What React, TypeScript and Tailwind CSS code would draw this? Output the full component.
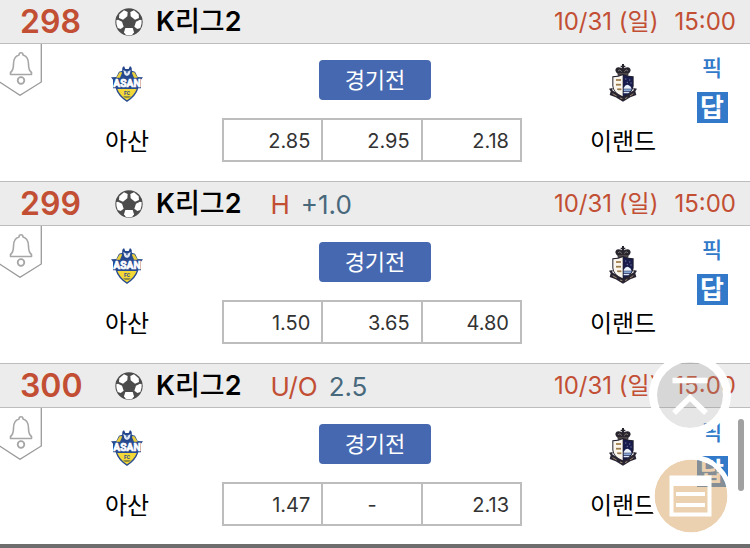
import { useState } from "react";

type Match = {
  no: number;
  league: string;
  rule?: { type: string; value: string };
  date: string;
  time: string;
  home: string;
  away: string;
  odds: string[];
};

const MATCHES: Match[] = [
  { no: 298, league: "K리그2", date: "10/31 (일)", time: "15:00", home: "아산", away: "이랜드", odds: ["2.85", "2.95", "2.18"] },
  { no: 299, league: "K리그2", rule: { type: "H", value: "+1.0" }, date: "10/31 (일)", time: "15:00", home: "아산", away: "이랜드", odds: ["1.50", "3.65", "4.80"] },
  { no: 300, league: "K리그2", rule: { type: "U/O", value: "2.5" }, date: "10/31 (일)", time: "15:00", home: "아산", away: "이랜드", odds: ["1.47", "-", "2.13"] },
];

function SoccerBall() {
  return (
    <svg viewBox="0 0 84 84" className="size-7 shrink-0">
      <circle cx="42" cy="42" r="41" fill="#4c4c4c" />
      <g fill="#fff">
        <path d="M13 19 L27 7 L38 12 L37 25 L24 35 L12 30 Z" />
        <path d="M71 19 L57 7 L46 12 L47 25 L60 35 L72 30 Z" />
        <path d="M4 37 L9 35 L21 41 L26 56 L17 63 L8 60 Q3 50 4 37 Z" />
        <path d="M80 37 L75 35 L63 41 L58 56 L67 63 L76 60 Q81 50 80 37 Z" />
        <path d="M31 60 L53 60 L57 73 L52 80 Q42 83 32 80 L27 73 Z" />
      </g>
    </svg>
  );
}

function BellTab() {
  return (
    <svg viewBox="0 0 42 52" className="w-[42px] h-[52px]" fill="none">
      <path d="M41.3 0V38L20 51.3L-1 37.5" stroke="#9a9a9a" strokeWidth="1.3" />
      <path
        d="M19 11 C19 8 23 8 23 11 C27 12 28.500 15 28.500 20 C28.500 25 29.500 27 31.500 28.500 V30.500 H10.500 V28.500 C12.500 27 13.500 25 13.500 20 C13.500 15 15 12 19 11 Z"
        stroke="#a6a6a6"
        strokeWidth="1.6"
        strokeLinejoin="round"
      />
      <circle cx="21" cy="36.500" r="3.300" stroke="#a6a6a6" strokeWidth="1.8" />
    </svg>
  );
}

function AsanCrest() {
  return (
    <svg viewBox="0 0 96 108" className="w-8 h-9">
      <path d="M24 17 L34 14 H62 L72 17 L80 33 L96 34 L90 41 V67 H82 Q76 90 48 108 Q20 90 14 67 H6 V41 L0 34 L16 33 Z" fill="#294b8f" />
      <path d="M26 19 L34 19 L27 35 L16 35 Z M70 19 L62 19 L69 35 L80 35 Z" fill="#e9cf3d" />
      <path d="M34 5 L39 0 L43 9 H53 L57 0 L62 5 L63 24 L55 33 H41 L33 24 Z" fill="#24468c" />
      <path d="M37 12 L44 16 H52 L59 12 L56 25 L51 29 H45 L40 25 Z" fill="#dfe8f5" />
      <path d="M44 16 H52 L48 23 Z" fill="#35599c" />
      <path d="M19 69 H77 Q70 88 48 103 Q26 88 19 69 Z" fill="#f4d838" />
      <text x="48" y="64" textAnchor="middle" fontFamily="Roboto, sans-serif" fontSize="31" fontWeight="700" fill="#fff" stroke="#fff" strokeWidth="2">ASAN</text>
      <text x="48" y="87" textAnchor="middle" fontFamily="Roboto, sans-serif" fontSize="15" fontWeight="700" fill="#294b8f">FC</text>
      <path d="M36 91 H60 L54 95 H42 Z" fill="#74783f" />
    </svg>
  );
}

function ElandCrest() {
  return (
    <svg viewBox="0 0 90 114" className="w-[30px] h-[38px]">
      <path d="M42 0 H48 V5 H52 V10 H48 V13 Q66 5 68 19 Q67 26 61 29 V35 H29 V29 Q23 26 22 19 Q24 5 42 13 V10 H38 V5 H42 Z" fill="#28252f" />
      <path d="M30 21 Q36 13 41 23 M60 21 Q54 13 49 23" fill="none" stroke="#8d8580" strokeWidth="2.500" />
      <path d="M31 30 H59" stroke="#a08f78" strokeWidth="2" />
      <path d="M3 74 L14 72 L13 79 L21 84 Q45 106 69 84 L77 79 L76 72 L87 74 L82 82 L85 93 L67 100 L45 113 L23 100 L5 93 L8 82 Z" fill="#292432" />
      <path d="M14 89 L26 96 M36 102 L43 104 M51 104 L58 100 M66 96 L76 89" stroke="#b49a76" strokeWidth="2.500" />
      <path d="M13 37 Q29 37 45 30 Q61 37 77 37 V66 Q75 88 45 101 Q15 88 13 66 Z" fill="#22202e" />
      <path d="M16 40 Q32 40 44 34 V97 Q17 86 16 66 Z" fill="#faf6ee" />
      <path d="M46 34 Q60 40 74 40 V66 Q73 86 46 97 Z" fill="#181c4d" />
      <path d="M24 45 H39 V51 H24 Z M24 59 H39 V65 H24 Z M27 73 H40 V79 H30 Z" fill="#c9a76d" />
      <path d="M24 48 H39 M24 62 H39 M27 76 H40" stroke="#6b5640" strokeWidth="2" />
      <path d="M51 45 h4 M63 48 h4 M56 55 h4 M67 57 h4" stroke="#77779a" strokeWidth="3" />
      <path d="M47 72 Q53 60 61 63 Q69 67 71 74 H47 Z" fill="#eaf2fb" />
      <path d="M47 76 H71 L68 81 H47 Z" fill="#88a9d5" />
      <path d="M47 83 H66 L61 88 H47 Z" fill="#dce7f5" />
    </svg>
  );
}

// Hangul is set one weight lighter than the latin letters beside it
function LeagueName({ name }: { name: string }) {
  return (
    <h2 className="ml-[13px] pt-0.5 text-[27px] font-semibold text-black">
      {name.split(/([가-힣]+)/).map((part, i) => (
        <span key={i} className={i % 2 ? "font-medium" : ""}>{part}</span>
      ))}
    </h2>
  );
}

function MatchHeader({ match }: { match: Match }) {
  return (
    <header className="flex h-11 items-center border-b border-[#bdbdbd] bg-[#ececec] pl-5 pr-[14px] whitespace-nowrap">
      <span className="w-[95px] text-[32px] font-semibold text-[#c24f34]">{match.no}</span>
      <SoccerBall />
      <LeagueName name={match.league} />
      {match.rule && (
        <p className="ml-[29px] flex gap-[11px] pt-0.5 text-[26px]">
          <span className="text-[#c24f34]">{match.rule.type}</span>
          <span className="text-[#48687c]">{match.rule.value}</span>
        </p>
      )}
      <p className="ml-auto flex gap-4 text-2xl text-[#c24f34]">
        <span>{match.date}</span>
        <span>{match.time}</span>
      </p>
    </header>
  );
}

function MatchCard({ match }: { match: Match }) {
  const [alarm, setAlarm] = useState(false);

  return (
    <article>
      <MatchHeader match={match} />
      <div className="grid h-[137px] grid-cols-[42px_180fr_300px_172fr_56px]">
        <button type="button" aria-label="알림" aria-pressed={alarm} onClick={() => setAlarm(!alarm)} className="self-start">
          <BellTab />
        </button>

        <div className="flex flex-col items-center gap-[22px] pt-[22px] pr-[10px]">
          <AsanCrest />
          <span className="text-2xl leading-9 text-black">{match.home}</span>
        </div>

        <div className="flex flex-col items-center pt-4">
          <button type="button" className="ml-1.5 h-10 w-28 rounded-[4px] bg-[#4668b0] text-[22px] text-white">
            경기전
          </button>
          <table className="mt-[18px] h-11 w-full table-fixed border-collapse text-xl text-[#333]">
            <tbody>
              <tr>
                {match.odds.map((odd, i) => (
                  <td key={i} className={`border-2 border-[#bdbdbd] pt-0.5 ${odd === "-" ? "text-center" : "pr-[11px] text-right"}`}>
                    {odd}
                  </td>
                ))}
              </tr>
            </tbody>
          </table>
        </div>

        <div className="flex flex-col items-center gap-[22px] pt-5 pl-[30px]">
          <ElandCrest />
          <span className="text-2xl leading-9 text-black">{match.away}</span>
        </div>

        <div className="flex flex-col items-center gap-2 pt-2 pr-5">
          <button type="button" className="text-[22px] leading-8 font-medium text-[#3279c9]">픽</button>
          <button type="button" className="size-[31px] bg-[#3279c9] text-[26px] leading-[31px] font-bold text-white">답</button>
        </div>
      </div>
    </article>
  );
}

function FloatingButtons() {
  return (
    <div className="fixed right-[18px] bottom-[10px] flex flex-col items-center gap-[17px]">
      <button type="button" aria-label="맨 위로" onClick={() => window.scrollTo({ top: 0 })}>
        <svg viewBox="0 0 84 84" className="size-[84px]" fill="none" stroke="#fff">
          <circle cx="42" cy="42" r="33" fill="#969696" fillOpacity="0.24" stroke="none" />
          <circle cx="42" cy="42" r="37" strokeWidth="8" />
          <path d="M24.500 27.500H59.500M26 60L42 44.500L58 60" strokeWidth="5.500" />
        </svg>
      </button>
      <button type="button" aria-label="목록">
        <svg viewBox="0 0 84 84" className="size-[84px]" fill="none" stroke="#fff">
          <circle cx="43" cy="42" r="36.500" fill="#d9a361" fillOpacity="0.5" stroke="none" />
          <circle cx="43" cy="42" r="39" strokeWidth="5" />
          <rect x="23.500" y="23.500" width="38" height="37" strokeWidth="4" />
          <path d="M22 27H63" strokeWidth="10" />
          <path d="M28 40H57M28 51H57" strokeWidth="4" />
        </svg>
      </button>
    </div>
  );
}

export default function App() {
  return (
    <main className="bg-white font-['Inter','Noto_Sans_CJK_KR',sans-serif]">
      <div className="divide-y divide-[#bdbdbd]">
        {MATCHES.map((match) => (
          <MatchCard key={match.no} match={match} />
        ))}
      </div>
      <div className="-mt-px h-1 bg-[#6d6d6d]" />

      <FloatingButtons />
      {/* scroll thumb */}
      <div className="fixed right-1.5 bottom-[57px] h-[72px] w-1.5 rounded-full bg-[#a1a1a1]" />
    </main>
  );
}
